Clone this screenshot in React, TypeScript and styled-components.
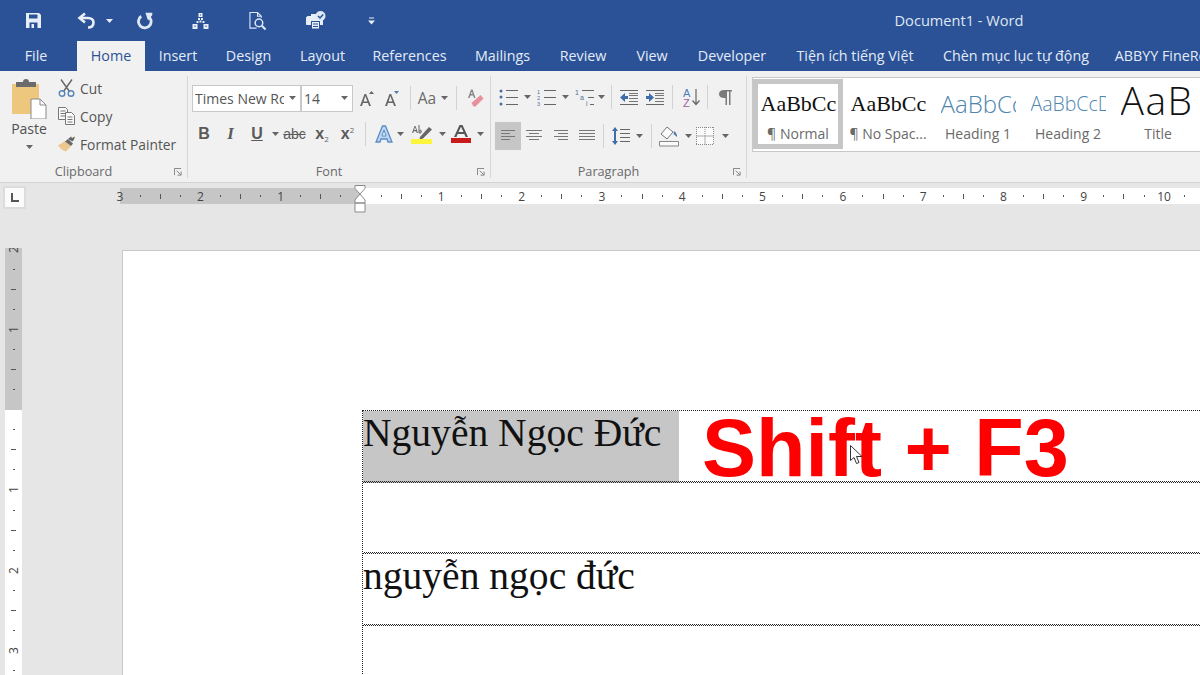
import React from 'react';
import styled, { createGlobalStyle } from 'styled-components';

const uiFont = '"Open Sans", "Noto Sans", sans-serif';
const blue = '#2b5296';
const line = '#c8c8c8';

const GlobalStyle = createGlobalStyle`
  html, body { margin: 0; padding: 0; background: #e6e6e6; }
  body { font-family: ${uiFont}; }
`;

const Window = styled.div`
  width: 1200px;
  height: 675px;
  overflow: hidden;
  position: relative;
  display: flex;
  flex-direction: column;
`;

/* title bar */
const TitleBar = styled.div`
  height: 41px;
  background: ${blue};
  display: flex;
  align-items: center;
  flex: none;
`;
const QuickSlot = styled.div<{ $w: number }>`
  width: ${(p) => p.$w}px;
  flex: none;
  display: flex;
  justify-content: center;
  align-items: center;
`;
const DocTitle = styled.div`
  margin-left: 519px;
  padding-bottom: 2px;
  width: 130px;
  text-align: center;
  white-space: nowrap;
  color: #dfe7f3;
  font-size: 14.6px;
`;

/* tabs */
const TabRow = styled.div`
  height: 30px;
  background: ${blue};
  display: flex;
  flex: none;
  padding-left: 25px;
`;
const Tab = styled.div<{ $active?: boolean; $w: number; $after?: number }>`
  width: ${(p) => p.$w}px;
  margin-right: ${(p) => p.$after ?? 0}px;
  flex: none;
  display: flex;
  justify-content: center;
  white-space: nowrap;
  font-size: 14.3px;
  line-height: 29px;
  color: ${(p) => (p.$active ? '#2b5296' : '#e3ebf6')};
  background: ${(p) => (p.$active ? '#f1f1f1' : 'transparent')};
`;

/* ribbon */
const Ribbon = styled.div`
  height: 111px;
  flex: none;
  display: flex;
  background: #f1f1f1;
  border-bottom: 1px solid #d4d4d4;
  box-sizing: content-box;
`;
const Group = styled.div<{ $w: number }>`
  width: ${(p) => p.$w}px;
  flex: none;
  box-sizing: border-box;
  position: relative;
  margin: 5px 0 4px;
  border-right: 1px solid #d6d6d6;
  display: flex;
  flex-direction: column;
`;
const GroupBody = styled.div`
  flex: 1;
  display: flex;
  flex-direction: column;
`;
const GroupLabel = styled.div`
  height: 17px;
  line-height: 21px;
  padding-right: 20px;
  text-align: center;
  font-size: 12.7px;
  color: #6a6a6a;
`;
const Launcher = styled.div`
  position: absolute;
  right: 5px;
  bottom: 2px;
  width: 8px;
  height: 8px;
  display: flex;
`;

const ClipboardBody = styled.div`
  display: flex;
  flex: 1;
`;
const PasteButton = styled.div`
  width: 58px;
  flex: none;
  display: flex;
  flex-direction: column;
  align-items: center;
  padding-top: 3px;
  font-size: 14px;
  color: #505050;
`;
const PasteCaret = styled.div`
  margin-top: 7px;
  display: flex;
`;
const ClipList = styled.div`
  display: flex;
  flex-direction: column;
  margin-top: -2px;
`;
const ClipRow = styled.div`
  display: flex;
  align-items: center;
  height: 28px;
  font-size: 13.8px;
  color: #555;
  white-space: nowrap;
`;
const ClipIcon = styled.div`
  width: 22px;
  flex: none;
  display: flex;
`;

const ToolRow = styled.div<{ $top: number; $left: number; $h?: number }>`
  display: flex;
  align-items: center;
  height: ${(p) => p.$h ?? 28}px;
  margin-top: ${(p) => p.$top}px;
  padding-left: ${(p) => p.$left}px;
`;
const Slot = styled.div<{ $w: number; $on?: boolean }>`
  width: ${(p) => p.$w}px;
  height: 100%;
  flex: none;
  display: flex;
  align-items: center;
  justify-content: center;
  background: ${(p) => (p.$on ? '#c6c6c6' : 'transparent')};
`;
const VSep = styled.div<{ $l: number; $r: number }>`
  width: 1px;
  height: 24px;
  flex: none;
  background: #d2d2d2;
  margin: 0 ${(p) => p.$r}px 0 ${(p) => p.$l}px;
`;
const Combo = styled.div<{ $w: number }>`
  width: ${(p) => p.$w}px;
  height: 27px;
  box-sizing: border-box;
  flex: none;
  background: #fff;
  border: 1px solid ${line};
  display: flex;
  align-items: center;
  justify-content: space-between;
  padding: 0 4px 0 2px;
  font-size: 14px;
  color: #555;
  overflow: hidden;
`;
const ComboText = styled.span<{ $w: number }>`
  display: block;
  width: ${(p) => p.$w}px;
  overflow: hidden;
  white-space: nowrap;
`;
const CaseText = styled.span`
  font-size: 15.5px;
  color: #6a6a6a;
  margin-right: 5px;
`;
const FormatLetter = styled.span<{ $italic?: boolean; $under?: boolean; $strike?: boolean; $size?: number; $serif?: boolean }>`
  font-family: ${(p) => (p.$serif ? '"Liberation Serif", serif' : '"Liberation Sans", sans-serif')};
  font-weight: ${(p) => (p.$strike ? 400 : 700)};
  font-size: ${(p) => p.$size ?? 16}px;
  font-style: ${(p) => (p.$italic ? 'italic' : 'normal')};
  text-decoration: ${(p) => (p.$under ? 'underline' : p.$strike ? 'line-through' : 'none')};
  color: #5a5a5a;
  white-space: nowrap;
`;
const Script = styled.span<{ $up?: boolean }>`
  font-size: 8px;
  font-weight: 400;
  position: relative;
  top: ${(p) => (p.$up ? -6 : 3)}px;
  font-family: ${uiFont};
  color: #666;
`;

/* style gallery */
const Gallery = styled.div`
  margin: 6px 0 0 5px;
  width: 460px;
  height: 75px;
  box-sizing: border-box;
  flex: none;
  background: #fff;
  border: 1px solid ${line};
  border-right: none;
  display: flex;
  padding-top: 1px;
`;
const StyleCard = styled.div<{ $on?: boolean }>`
  width: 90px;
  height: 70px;
  flex: none;
  box-sizing: border-box;
  border: 5px solid ${(p) => (p.$on ? '#c6c6c6' : 'transparent')};
  display: flex;
  flex-direction: column;
  align-items: center;
`;
const StyleSample = styled.div<{ $font: string; $size: number; $color: string; $weight: number; $lh: number; $track: number }>`
  width: 75px;
  height: 40px;
  line-height: ${(p) => p.$lh}px;
  letter-spacing: ${(p) => p.$track}px;
  overflow: hidden;
  white-space: nowrap;
  font-family: ${(p) => p.$font};
  font-weight: ${(p) => p.$weight};
  font-size: ${(p) => p.$size}px;
  color: ${(p) => p.$color};
`;
const StyleName = styled.div`
  font-size: 14px;
  line-height: 20px;
  color: #6a6a6a;
  white-space: nowrap;
`;

/* rulers */
const RulerRow = styled.div`
  height: 65px;
  flex: none;
  background: #e6e6e6;
  display: flex;
  align-items: flex-start;
  position: relative;
`;
const TabStop = styled.div`
  margin: 3px 0 0 3px;
  width: 23px;
  height: 23px;
  box-sizing: border-box;
  flex: none;
  background: #fbfbfb;
  border: 2px solid #dcdcdc;
  display: flex;
  align-items: center;
  justify-content: center;
`;
const HTrack = styled.div`
  margin: 5px 0 0 94px;
  height: 16px;
  flex: 1;
  display: flex;
  background: linear-gradient(to right, #c6c6c6 240px, #fff 240px);
`;
const HCell = styled.div`
  flex: none;
  width: 20.08px;
  height: 16px;
  display: flex;
  align-items: center;
  justify-content: center;
  font-size: 12px;
  color: #444;
  &:first-child { margin-left: -10px; }
`;
const HTick = styled.i<{ $long?: boolean }>`
  display: block;
  width: 1px;
  height: ${(p) => (p.$long ? 5 : 2)}px;
  background: #555;
`;
const Indent = styled.div`
  position: absolute;
  left: 354px;
  top: 2px;
  display: flex;
`;
const Body = styled.div`
  flex: 1;
  display: flex;
  background: #e6e6e6;
  min-height: 0;
`;
const VTrack = styled.div`
  margin-left: 5px;
  width: 17px;
  flex: none;
  overflow: hidden;
  display: flex;
  flex-direction: column;
  background: linear-gradient(to bottom, #c6c6c6 162px, #fff 162px);
`;
const VCell = styled.div`
  flex: none;
  height: 20.08px;
  display: flex;
  align-items: center;
  justify-content: center;
  font-size: 12px;
  color: #444;
  &:first-child { margin-top: -9px; }
`;
const VNum = styled.span`
  display: block;
  transform: rotate(-90deg);
`;
const VTick = styled.i<{ $long?: boolean }>`
  display: block;
  height: 1px;
  width: ${(p) => (p.$long ? 5 : 2)}px;
  background: #555;
`;

/* page */
const Page = styled.div`
  margin: 2px 0 0 100px;
  flex: 1;
  background: #fff;
  border-left: 1px solid ${line};
  border-top: 1px solid ${line};
  padding: 159px 0 0 239px;
  position: relative;
  min-width: 0;
`;
const DocTable = styled.div`
  border-left: 1px dotted #222;
  border-top: 1px dotted #222;
`;
const DocRow = styled.div<{ $h: number; $open?: boolean }>`
  height: ${(p) => p.$h}px;
  box-sizing: border-box;
  display: flex;
  align-items: flex-start;
  position: relative;
  &::after {
    content: '';
    display: ${(p) => (p.$open ? 'none' : 'block')};
    position: absolute;
    left: 0;
    right: 0;
    bottom: 0;
    height: 2px;
    background: conic-gradient(#222 25%, transparent 0 50%, #222 0 75%, transparent 0) 0 0 / 2px 2px;
  }
`;
const DocText = styled.div`
  font-family: "Liberation Serif", "Times New Roman", serif;
  font-size: 39.55px;
  line-height: 44px;
  color: #111;
  white-space: nowrap;
`;
const Selected = styled.div`
  width: 316px;
  height: 100%;
  flex: none;
  background: #c6c6c6;
`;
const Callout = styled.div`
  margin: -7px 0 0 23px;
  font-family: "Liberation Sans", Arial, sans-serif;
  font-weight: 700;
  font-size: 81px;
  line-height: 88px;
  color: #fe0000;
  white-space: nowrap;
`;
const Pointer = styled.div`
  position: absolute;
  left: 727px;
  top: 194px;
  display: flex;
`;

/* drawings */
const Caret = ({ c = '#666' }: { c?: string }) => (
  <svg width="7" height="4" viewBox="0 0 7 4"><path d="M0 0h7L3.500 4z" fill={c} /></svg>
);
const LauncherIcon = () => (
  <svg width="8" height="8" viewBox="0 0 9 9" fill="none" stroke="#777" strokeWidth="1">
    <path d="M.5 8V.5H8M3 3l4.500 4.500M4 8h4V4" />
  </svg>
);
const SaveIcon = () => (
  <svg width="17" height="17" viewBox="0 0 17 17">
    <path d="M1 1h13l2 2v13H1z" fill="#e8eef8" />
    <path d="M4 2.500h8.500v4H4z" fill={blue} />
    <path d="M4.500 10.500h8V16h-8z" fill={blue} />
    <path d="M6.500 12h2.500v4H6.500z" fill="#e8eef8" />
  </svg>
);
const UndoIcon = () => (
  <svg width="19" height="17" viewBox="0 0 19 17" fill="none" stroke="#e8eef8" strokeWidth="2.600">
    <path d="M8 1.500L2.500 6 8 10.500" />
    <path d="M3 6h8c3.500 0 5.500 2 5.500 4.500S15 15.500 11 15.500" />
  </svg>
);
const RepeatIcon = () => (
  <svg width="18" height="18" viewBox="0 0 18 18" fill="none" stroke="#e0e8f5" strokeWidth="3">
    <path d="M5.500 4A6.700 6.700 0 1 0 12 3.400" />
    <path d="M11 1h5.500V2.500L13 7z" strokeWidth="1.500" fill="#e0e8f5" />
  </svg>
);
const TreeIcon = () => (
  <svg width="17" height="16" viewBox="0 0 16 16" fill="#e8eef8">
    <path d="M6 0h4v4H6zM0 11h5v5H0zM11 11h5v5h-5z" />
    <path d="M5.500 5h2v2h-2zM8.500 5h2v2h-2zM4 8h2v2H4zM7 7.500h2v2H7zM10 8h2v2h-2z" />
    <path d="M2 12.500h1v1.500H2zM13 12.500h1v1.500h-1zM7.500 1.500h1v1h-1z" fill={blue} />
  </svg>
);
const PreviewIcon = () => (
  <svg width="19" height="20" viewBox="0 0 19 20" fill="none" stroke="#dbe6f4" strokeWidth="1.200">
    <path d="M8 17.500H1V1h8l4 4v1.500M9 1v4h4" />
    <circle cx="10.500" cy="12" r="4" strokeWidth="1.600" />
    <path d="M13.500 15l4 4" strokeWidth="2.200" />
  </svg>
);
const PrintCheckIcon = () => (
  <svg width="20" height="19" viewBox="0 0 20 19">
    <path d="M5 3h8v4H5z" fill="#e8eef8" />
    <path d="M0 7c0-1 1-2 2-2h13c1 0 2 1 2 2v7h-3V10H5v4H1c-.6 0-1-.5-1-1z" fill="#e8eef8" />
    <path d="M5.500 10.500h8V18h-8z" fill="#e8eef8" stroke={blue} />
    <path d="M7 13h5M7 15.500h5" stroke={blue} />
    <circle cx="14.500" cy="5" r="5" fill="#dfe8f5" />
    <path d="M12 5l2 2 3.200-3.600" stroke={blue} strokeWidth="1.500" fill="none" />
  </svg>
);
const CustomizeIcon = () => (
  <svg width="7" height="8" viewBox="0 0 7 8"><path d="M1 .5h5v1H1zM0 3.500h7L3.500 7.500z" fill="#e8eef8" /></svg>
);
const PasteIcon = () => (
  <svg width="36" height="40" viewBox="0 0 36 40">
    <path d="M1 5h27v30H1z" fill="#eec77f" />
    <path d="M5 3h7a3 3 0 0 1 6 0h7v5H5z" fill="#6b6b6b" />
    <path d="M20 20h9l6 6v14H20z" fill="#fff" stroke="#8a8a8a" />
    <path d="M29 20v6h6" fill="none" stroke="#8a8a8a" />
  </svg>
);
const CutIcon = () => (
  <svg width="17" height="18" viewBox="0 0 17 18" fill="none">
    <path d="M3 .5l8.500 12M14 .5L5.500 12.500" stroke="#666" strokeWidth="1.400" />
    <circle cx="4" cy="14.500" r="2.800" stroke="#5b84ba" strokeWidth="1.400" />
    <circle cx="13" cy="14.500" r="2.800" stroke="#5b84ba" strokeWidth="1.400" />
  </svg>
);
const CopyIcon = () => (
  <svg width="17" height="18" viewBox="0 0 17 18" fill="#fafafa" stroke="#777">
    <path d="M.5.5h7l2 2v10H.5zM2.500 4h5M2.500 6.500h5M2.500 9h5" />
    <path d="M7.500 5.500h6l3 3v9h-9zM9.500 10h5M9.500 12.500h5M9.500 15h5" />
  </svg>
);
const BrushIcon = () => (
  <svg width="19" height="16" viewBox="0 0 19 16">
    <path d="M0 9.500L7 5l6 5-5 5.500C5 15 2 12 0 9.500z" fill="#ecc88f" />
    <path d="M7 5.500l6 4.500 2-2.500-5-4.500z" fill="#6a6a6a" />
    <path d="M10 3l3-2.500 1 1.500 3-1.500-1 3-1.500 2z" fill="#666" />
  </svg>
);
const GrowIcon = ({ up }: { up: boolean }) => (
  <svg width="16" height="15" viewBox="0 0 16 15">
    <path d="M5.500 3h1.600L12 15h-2l-1-3H4l-1 3H1zM4.600 10.400h3.800L6.300 5z" fill="#666" fillRule="evenodd" />
    <path d={up ? 'M10 3l2.500-3L15 3z' : 'M10 0h5l-2.500 3z'} fill={up ? '#666' : '#4f7cb3'} />
  </svg>
);
const EraserIcon = () => (
  <svg width="17" height="18" viewBox="0 0 17 18">
    <path d="M1 9L4 .5h1.600L8.500 9H7L6 6.500H3.500L2.500 9zM4 5h1.600L4.800 2.500z" fill="#888" fillRule="evenodd" />
    <path d="M4.500 14l9-8 3 3.500-8 8h-2z" fill="#e8909c" />
  </svg>
);
const TextEffectIcon = () => (
  <svg width="18" height="18" viewBox="0 0 18 18">
    <path d="M7.500 1h3L17 17h-4l-1-3H6l-1 3H1z" fill="#bcd5ee" stroke="#5b8ec7" strokeWidth="1.300" />
    <path d="M7 11h4L9 5z" fill="#f1f1f1" stroke="#5b8ec7" />
  </svg>
);
const HighlightIcon = () => (
  <svg width="22" height="20" viewBox="0 0 22 20">
    <path d="M1 9l2.500-7h1L7 9H5.700l-.5-1.700H2.700L2.200 9zM3 6h2L4 3z" fill="#666" fillRule="evenodd" />
    <path d="M8 1v8h1V6c2 0 2 3 0 3" fill="none" stroke="#666" />
    <path d="M9 13l9-10 3 2.500-9 9-3.500 1z" fill="#666" />
    <path d="M0 15h21v5H0z" fill="#fbf63c" />
  </svg>
);
const FontColorIcon = () => (
  <svg width="20" height="18" viewBox="0 0 20 18">
    <path d="M8.500 0h3L17 12h-2.400l-1.300-3H6.700l-1.300 3H3zM7.500 7h5L10 1.800z" fill="#555" fillRule="evenodd" />
    <path d="M0 13h20v5H0z" fill="#c81a1a" />
  </svg>
);
const Lines = ({ rows, w, x = 0, c = '#666' }: { rows: number[]; w: number; x?: number; c?: string }) => (
  <>{rows.map((y) => <path key={y} d={`M${x} ${y}.5h${w}`} stroke={c} strokeWidth="1" />)}</>
);
const BulletIcon = () => (
  <svg width="19" height="17" viewBox="0 0 19 17">
    <circle cx="2" cy="2" r="1.500" fill="#4d6f9e" /><circle cx="2" cy="8" r="1.500" fill="#4d6f9e" /><circle cx="2" cy="15" r="1.500" fill="#4d6f9e" />
    <Lines rows={[1, 8, 15]} w={12} x={7} />
  </svg>
);
const NumberIcon = () => (
  <svg width="19" height="17" viewBox="0 0 19 17">
    <Lines rows={[1, 8, 15]} w={12} x={7} />
    <text x="0" y="5" fontSize="5.500" fill="#4d6f9e" fontFamily="Liberation Sans">1</text>
    <text x="0" y="11" fontSize="5.500" fill="#4d6f9e" fontFamily="Liberation Sans">2</text>
    <text x="0" y="17" fontSize="5.500" fill="#4d6f9e" fontFamily="Liberation Sans">3</text>
  </svg>
);
const MultiIcon = () => (
  <svg width="20" height="17" viewBox="0 0 20 17">
    <Lines rows={[1]} w={12} x={7} />
    <Lines rows={[8]} w={6} x={13} />
    <Lines rows={[15]} w={4} x={15} />
    <text x="0" y="6" fontSize="7" fill="#4d6f9e" fontFamily="Liberation Sans">1</text>
    <text x="5" y="11" fontSize="7" fill="#4d6f9e" fontFamily="Liberation Sans">a</text>
    <text x="11" y="17" fontSize="7" fill="#4d6f9e" fontFamily="Liberation Sans">i</text>
  </svg>
);
const IndentIcon = ({ flip }: { flip?: boolean }) => (
  <svg width="18" height="17" viewBox="0 0 18 17">
    <Lines rows={[1, 15]} w={18} />
    <Lines rows={[4, 6, 9, 12]} w={9} x={9} c="#777" />
    <path d={flip ? 'M0 7h3V4l5 4.500L3 13v-3H0z' : 'M8 7H5V4L0 8.500 5 13v-3h3z'} fill="#3f6da8" />
  </svg>
);
const SortIcon = () => (
  <svg width="18" height="19" viewBox="0 0 18 19">
    <text x="0" y="9" fontSize="11" fontFamily="Liberation Sans" fill="#4d7fb8">A</text>
    <text x="0" y="19" fontSize="11" fontFamily="Liberation Sans" fill="#a25da6">Z</text>
    <path d="M13 1v15M9.500 12.500L13 16.500l3.500-4" fill="none" stroke="#666" strokeWidth="1.200" />
  </svg>
);
const PilcrowIcon = () => (
  <svg width="13" height="16" viewBox="0 0 13 16">
    <path d="M5 1h8v1.500h-1.500V16h-1.500V2.500H8V16H6.500V9H5C2 9 0 7.500 0 5s2-4 5-4z" fill="#7a7a7a" />
  </svg>
);
const AlignIcon = ({ rows }: { rows: [number, number][] }) => (
  <svg width="18" height="14" viewBox="0 0 18 14">
    {rows.map(([x, w], i) => (
      <path key={i} d={`M${x} ${i * 3 + 1}.5h${w}`} stroke="#777" strokeWidth="1" />
    ))}
  </svg>
);
const SpacingIcon = () => (
  <svg width="18" height="18" viewBox="0 0 18 18">
    <Lines rows={[2, 6, 10, 14]} w={10} x={8} />
    <path d="M3 0l3 4H4v10h2l-3 4-3-4h2V4H0z" fill="#3f6da8" />
  </svg>
);
const ShadingIcon = () => (
  <svg width="21" height="21" viewBox="0 0 21 21" fill="none">
    <path d="M8 1L2 8l6 5 6-7z" fill="#fbfbfb" stroke="#777" />
    <path d="M15 5c2 1 3.500 4 3 6l-3.500-3z" fill="#4f7fb6" />
    <path d="M.5 15.500h19v4.500H.5z" fill="#fbfbfb" stroke="#888" />
  </svg>
);
const BordersIcon = () => (
  <svg width="18" height="18" viewBox="0 0 18 18" fill="#fbfbfb" stroke="#888">
    <path d="M.5.500h17v17H.5z" stroke="none" />
    <path d="M0 .5h18M0 17.500h18M.5 0v18M17.500 0v18M9 0v9" strokeDasharray="1 1" fill="none" />
    <path d="M9 9v9M0 9h18" fill="none" stroke="#aaa" />
  </svg>
);
const CornerIcon = () => (
  <svg width="9" height="9" viewBox="0 0 9 9"><path d="M1 0h2v7h6v2H1z" fill="#555" /></svg>
);
const IndentMarker = () => (
  <svg width="12" height="28" viewBox="0 0 12 28" fill="#fff" stroke="#8a8a8a">
    <path d="M1 .5h10v3L6 9 1 3.500zM6 9l5 6v3H1v-3zM1 18h10v9H1z" />
  </svg>
);
const MousePointer = () => (
  <svg width="14" height="20" viewBox="0 0 14 20">
    <path d="M.5.500v15l3.500-3 2.500 6 2.500-1-2.500-6H12z" fill="#fff" stroke="#333" />
  </svg>
);

const tabs: { name: string; w: number; after?: number }[] = [
  { name: 'File', w: 22, after: 30 },
  { name: 'Home', w: 68 },
  { name: 'Insert', w: 66 },
  { name: 'Design', w: 75 },
  { name: 'Layout', w: 73 },
  { name: 'References', w: 101 },
  { name: 'Mailings', w: 85 },
  { name: 'Review', w: 76 },
  { name: 'View', w: 62 },
  { name: 'Developer', w: 98 },
  { name: 'Tiện ích tiếng Việt', w: 148 },
  { name: 'Chèn mục lục tự động', w: 174 },
  { name: 'ABBYY FineReader 12', w: 166 },
];

const sansStack = '"Open Sans", sans-serif';
const serifStack = '"Liberation Serif", serif';
const styleCards = [
  { name: '¶ Normal', sample: 'AaBbCc', font: serifStack, size: 22, weight: 400, color: '#111', lh: 40, track: 0, on: true },
  { name: '¶ No Spac...', sample: 'AaBbCc', font: serifStack, size: 22, weight: 400, color: '#111', lh: 40, track: 0 },
  { name: 'Heading 1', sample: 'AaBbCc', font: sansStack, size: 24, weight: 300, color: '#4f86b0', lh: 40, track: 0 },
  { name: 'Heading 2', sample: 'AaBbCcD', font: sansStack, size: 19.500, weight: 300, color: '#4f86b0', lh: 40, track: 0 },
  { name: 'Title', sample: 'AaB', font: sansStack, size: 39, weight: 300, color: '#111', lh: 31, track: 1.500 },
];

const hMarks = (i: number) => {
  const m = i % 4;
  if (m === 1 || m === 3) return <HTick />;
  if (m === 2) return <HTick $long />;
  const inch = (i - 12) / 4;
  return inch === 0 ? null : Math.abs(inch);
};
const vMarks = (i: number) => {
  const m = i % 4;
  if (m === 1 || m === 3) return <VTick />;
  if (m === 2) return <VTick $long />;
  const inch = (i - 8) / 4;
  return inch === 0 ? null : <VNum>{Math.abs(inch)}</VNum>;
};

const App = () => (
  <Window>
    <GlobalStyle />
    <TitleBar>
      <QuickSlot $w={24} />
      <QuickSlot $w={18}><SaveIcon /></QuickSlot>
      <QuickSlot $w={34} />
      <QuickSlot $w={20}><UndoIcon /></QuickSlot>
      <QuickSlot $w={26}><Caret c="#e8eef8" /></QuickSlot>
      <QuickSlot $w={14} />
      <QuickSlot $w={17}><RepeatIcon /></QuickSlot>
      <QuickSlot $w={39} />
      <QuickSlot $w={17}><TreeIcon /></QuickSlot>
      <QuickSlot $w={40} />
      <QuickSlot $w={18}><PreviewIcon /></QuickSlot>
      <QuickSlot $w={39} />
      <QuickSlot $w={20}><PrintCheckIcon /></QuickSlot>
      <QuickSlot $w={41} />
      <QuickSlot $w={8}><CustomizeIcon /></QuickSlot>
      <DocTitle>Document1 - Word</DocTitle>
    </TitleBar>

    <TabRow>
      {tabs.map((t) => (
        <Tab key={t.name} $w={t.w} $after={t.after} $active={t.name === 'Home'}>{t.name}</Tab>
      ))}
    </TabRow>

    <Ribbon>
      <Group $w={188}>
        <GroupBody>
          <ClipboardBody>
            <PasteButton>
              <PasteIcon />
              Paste
              <PasteCaret><Caret /></PasteCaret>
            </PasteButton>
            <ClipList>
              <ClipRow><ClipIcon><CutIcon /></ClipIcon>Cut</ClipRow>
              <ClipRow><ClipIcon><CopyIcon /></ClipIcon>Copy</ClipRow>
              <ClipRow><ClipIcon><BrushIcon /></ClipIcon>Format Painter</ClipRow>
            </ClipList>
          </ClipboardBody>
        </GroupBody>
        <GroupLabel>Clipboard</GroupLabel>
        <Launcher><LauncherIcon /></Launcher>
      </Group>

      <Group $w={303}>
        <GroupBody>
          <ToolRow $top={8} $left={4}>
            <Combo $w={109}><ComboText $w={89}>Times New Roman</ComboText><Caret /></Combo>
            <Combo $w={52}>14<Caret /></Combo>
            <Slot $w={27}><GrowIcon up /></Slot>
            <Slot $w={24}><GrowIcon up={false} /></Slot>
            <VSep $l={6} $r={3} />
            <Slot $w={38}><CaseText>Aa</CaseText><Caret /></Slot>
            <VSep $l={4} $r={5} />
            <Slot $w={26}><EraserIcon /></Slot>
          </ToolRow>
          <ToolRow $top={8} $left={3}>
            <Slot $w={26}><FormatLetter>B</FormatLetter></Slot>
            <Slot $w={27}><FormatLetter $italic $serif $size={17}>I</FormatLetter></Slot>
            <Slot $w={26}><FormatLetter $under>U</FormatLetter></Slot>
            <Slot $w={10}><Caret /></Slot>
            <Slot $w={29}><FormatLetter $strike $size={14}>abc</FormatLetter></Slot>
            <Slot $w={26}><FormatLetter>x<Script>2</Script></FormatLetter></Slot>
            <Slot $w={25}><FormatLetter>x<Script $up>2</Script></FormatLetter></Slot>
            <VSep $l={5} $r={8} />
            <Slot $w={20}><TextEffectIcon /></Slot>
            <Slot $w={12}><Caret /></Slot>
            <Slot $w={32}><HighlightIcon /></Slot>
            <Slot $w={8}><Caret /></Slot>
            <Slot $w={30}><FontColorIcon /></Slot>
            <Slot $w={8}><Caret /></Slot>
          </ToolRow>
        </GroupBody>
        <GroupLabel>Font</GroupLabel>
        <Launcher><LauncherIcon /></Launcher>
      </Group>

      <Group $w={256}>
        <GroupBody>
          <ToolRow $top={9} $left={7} $h={24}>
            <Slot $w={20}><BulletIcon /></Slot>
            <Slot $w={18}><Caret /></Slot>
            <Slot $w={20}><NumberIcon /></Slot>
            <Slot $w={18}><Caret /></Slot>
            <Slot $w={21}><MultiIcon /></Slot>
            <Slot $w={12}><Caret /></Slot>
            <VSep $l={4} $r={8} />
            <Slot $w={18}><IndentIcon /></Slot>
            <Slot $w={8} />
            <Slot $w={18}><IndentIcon flip /></Slot>
            <VSep $l={8} $r={10} />
            <Slot $w={18}><SortIcon /></Slot>
            <VSep $l={6} $r={11} />
            <Slot $w={13}><PilcrowIcon /></Slot>
          </ToolRow>
          <ToolRow $top={13} $left={4}>
            <Slot $w={26} $on><AlignIcon rows={[[2, 14], [2, 9], [2, 14], [2, 9]]} /></Slot>
            <Slot $w={26}><AlignIcon rows={[[1, 16], [4, 10], [1, 16], [4, 10]]} /></Slot>
            <Slot $w={27}><AlignIcon rows={[[2, 14], [6, 10], [2, 14], [6, 10]]} /></Slot>
            <Slot $w={26}><AlignIcon rows={[[1, 16], [1, 16], [1, 16], [1, 16]]} /></Slot>
            <VSep $l={3} $r={7} />
            <Slot $w={19}><SpacingIcon /></Slot>
            <Slot $w={18}><Caret /></Slot>
            <VSep $l={3} $r={6} />
            <Slot $w={22}><ShadingIcon /></Slot>
            <Slot $w={16}><Caret /></Slot>
            <Slot $w={18}><BordersIcon /></Slot>
            <Slot $w={22}><Caret /></Slot>
          </ToolRow>
        </GroupBody>
        <GroupLabel>Paragraph</GroupLabel>
        <Launcher><LauncherIcon /></Launcher>
      </Group>

      <Gallery>
        {styleCards.map((s) => (
          <StyleCard key={s.name} $on={s.on}>
            <StyleSample $font={s.font} $size={s.size} $color={s.color} $weight={s.weight} $lh={s.lh} $track={s.track}>
              {s.sample}
            </StyleSample>
            <StyleName>{s.name}</StyleName>
          </StyleCard>
        ))}
      </Gallery>
    </Ribbon>

    <RulerRow>
      <TabStop><CornerIcon /></TabStop>
      <HTrack>
        {Array.from({ length: 56 }, (_, i) => (
          <HCell key={i}>{hMarks(i)}</HCell>
        ))}
      </HTrack>
      <Indent><IndentMarker /></Indent>
    </RulerRow>

    <Body>
      <VTrack>
        {Array.from({ length: 22 }, (_, i) => (
          <VCell key={i}>{vMarks(i)}</VCell>
        ))}
      </VTrack>
      <Page>
        <DocTable>
          <DocRow $h={72}>
            <Selected><DocText>Nguyễn Ngọc Đức</DocText></Selected>
            <Callout>Shift + F3</Callout>
          </DocRow>
          <DocRow $h={71} />
          <DocRow $h={72}><DocText>nguyễn ngọc đức</DocText></DocRow>
          <DocRow $h={60} $open />
        </DocTable>
        <Pointer><MousePointer /></Pointer>
      </Page>
    </Body>
  </Window>
);

export default App;
